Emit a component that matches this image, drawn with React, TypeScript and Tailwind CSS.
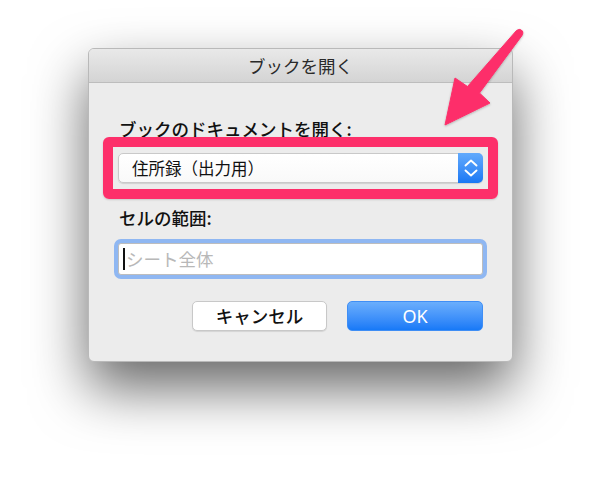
import React from "react";

const jp = { fontFamily: '"Noto Sans CJK JP", "Noto Sans", sans-serif' };

export default function App() {
  return (
    <div className="relative w-[600px] h-[486px] bg-white overflow-hidden" style={jp}>
      <div className="pl-[88px] pt-[48px]">
        <div className="w-[425px] h-[314px] rounded-[6px] border border-[#b9b9b9] bg-[#ececec] shadow-[0_26px_55px_rgba(0,0,0,0.6)] overflow-hidden flex flex-col">
          <div className="h-[34px] shrink-0 bg-gradient-to-b from-[#e9e9e9] to-[#d4d4d4] border-b border-[#bdbdbd] flex items-center justify-center">
            <span className="text-[17.5px] leading-none text-[#2a2a2a] pt-[1px]">ブックを開く</span>
          </div>
          <div className="px-[29px] pt-[35px] flex flex-col">
            <div className="text-[17.5px] leading-[22px] font-medium text-[#111] pl-[1px]">ブックのドキュメントを開く:</div>
            <div className="relative mt-[13px] h-[30px]">
              <div className="absolute -left-[15px] -right-[15px] -top-[16px] -bottom-[16px] border-[10px] border-[#fd2f6a] rounded-[6px] shadow-[0_1px_2px_rgba(0,0,0,0.15)]" />
              <div className="relative h-[30px] flex rounded-[5px] bg-gradient-to-b from-white to-[#f9f9f9] border border-[#c9c9c9] shadow-[0_1px_1px_rgba(0,0,0,0.12)]">
                <div className="flex-1 flex items-center pl-[13px] text-[16.5px] text-[#111]">住所録（出力用）</div>
                <div className="w-[25px] -my-[1px] -mr-[1px] rounded-r-[5px] bg-gradient-to-b from-[#62aafc] to-[#1877f4] flex items-center justify-center">
                  <svg width="14" height="22" viewBox="0 0 14 22" fill="none" stroke="white" strokeWidth="1.9" strokeLinecap="round" strokeLinejoin="round">
                    <path d="M1.5 8.5 L7 3.5 L12.5 8.5" />
                    <path d="M1.5 13.5 L7 18.5 L12.5 13.5" />
                  </svg>
                </div>
              </div>
            </div>
            <div className="mt-[24px] text-[17.5px] leading-[22px] font-medium text-[#111] pl-[1px]">セルの範囲:</div>
            <div className="mt-[14px] h-[32px] rounded-[3px] bg-white border border-[#bdbdbd] shadow-[0_0_0_4px_#8fb7f2] flex items-center pl-[4px]">
              <div className="w-[2px] h-[22px] bg-[#111]" />
              <span className="ml-[1px] text-[17.5px] text-[#b8b8b8]">シート全体</span>
            </div>
            <div className="mt-[26px] flex justify-end gap-[20px]">
              <div className="w-[135px] h-[30px] rounded-[5px] bg-white border border-[#c8c8c8] shadow-[0_1px_1px_rgba(0,0,0,0.1)] flex items-center justify-center text-[17.5px] font-medium text-[#111]">
                キャンセル
              </div>
              <div className="w-[136px] h-[30px] rounded-[5px] bg-gradient-to-b from-[#6aaefc] to-[#1679f7] border border-[#3f8ef5] flex items-center justify-center text-[18px] text-white" style={{ fontFamily: '"Noto Sans", "Liberation Sans", sans-serif' }}>
                OK
              </div>
            </div>
          </div>
        </div>
      </div>
      <svg className="absolute left-0 top-0" width="600" height="486" viewBox="0 0 600 486">
        <defs>
          <filter id="ds" x="-20%" y="-20%" width="140%" height="140%">
            <feDropShadow dx="0" dy="1" stdDeviation="1.2" floodColor="#000" floodOpacity="0.25" />
          </filter>
        </defs>
        <path
          d="M516.5 30.5 Q520 28 522.5 31 Q523.5 33 522 35.5 L479.5 93 L490 103 L445 125 L455 78 L467.5 86.5 Z"
          fill="#fd2f6a"
          strokeLinejoin="round"
          stroke="#fd2f6a"
          strokeWidth="1"
          filter="url(#ds)"
        />
      </svg>
    </div>
  );
}
